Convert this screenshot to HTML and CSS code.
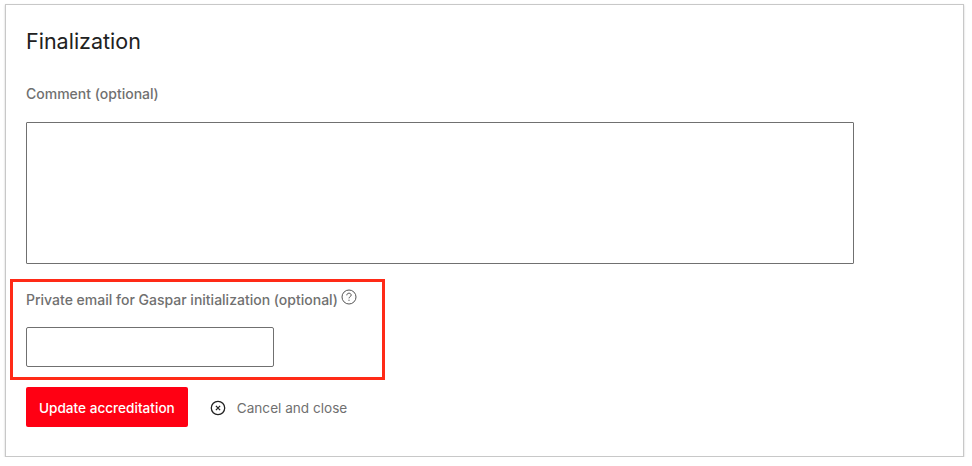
FILE: index.html
```html
<!DOCTYPE html>
<html lang="en">

<head>
    <meta charset="UTF-8">
    <title>Finalization</title>
    <link rel="stylesheet" href="styles.css">
</head>

<body>
    <form class="card">
        <h2>Finalization</h2>
        <div class="form-group comment-group">
            <label for="comment">Comment (optional)</label>
            <textarea id="comment"></textarea>
        </div>
        <div class="form-group email-group">
            <label for="email">Private email for Gaspar initialization (optional)
                <svg class="help-icon" width="16" height="16" viewBox="0 -1 16 16" fill="none" stroke="#555" stroke-width="1">
                    <circle cx="8" cy="8" r="7" />
                    <path d="M5.8 6.3c0-1.3 1-2.1 2.2-2.1s2.2 .8 2.2 1.9c0 1.6-2.2 1.6-2.2 3.2" />
                    <path d="M8 10.7v1.2" />
                </svg>
            </label>
            <input type="text" id="email">
        </div>
        <div class="actions">
            <button type="button" class="btn-primary">Update accreditation</button>
            <a class="cancel" href="#">
                <svg width="16" height="16" viewBox="0 0 16 16" fill="none" stroke="#222" stroke-width="1.3">
                    <circle cx="8" cy="8" r="6.7" />
                    <path d="M5.9 5.9l4.2 4.2M10.1 5.9l-4.2 4.2" />
                </svg>
                Cancel and close
            </a>
        </div>
        <div class="highlight"></div>
    </form>
</body>

</html>
```

FILE: styles.css
```css
body {
    margin: 0;
    background-color: #fff;
    font-family: 'Inter', 'Liberation Sans', sans-serif;
}

.card {
    position: relative;
    box-sizing: border-box;
    width: 959px;
    height: 453px;
    margin: 4px 0 0 5px;
    padding: 24px 20px;
    background-color: #fff;
    border: 1px solid #c8c8c8;
    box-shadow: 0 1px 2px rgba(0, 0, 0, 0.2);
}

h2 {
    margin: 0;
    height: 24px;
    font-size: 21.5px;
    line-height: 24px;
    font-weight: 400;
    color: #212121;
}

.form-group label {
    display: block;
    font-size: 14px;
    line-height: 20px;
    font-weight: 500;
    color: #707070;
}

.comment-group {
    margin-top: 31px;
}

textarea {
    display: block;
    box-sizing: border-box;
    width: 828px;
    height: 142px;
    margin-top: 18px;
    border: 1px solid #707070;
    border-radius: 1px;
    resize: none;
}

.email-group {
    margin-top: 24px;
}

.email-group label {
    height: 20px;
}

.help-icon {
    vertical-align: 1px;
    margin-left: -1px;
    overflow: visible;
}

input {
    display: block;
    box-sizing: border-box;
    width: 248px;
    height: 40px;
    margin-top: 19px;
    border: 1px solid #707070;
    border-radius: 2px;
}

.actions {
    display: flex;
    align-items: center;
    gap: 22px;
    margin-top: 20px;
}

.btn-primary {
    height: 40px;
    padding: 2px 13px 0;
    border: none;
    border-radius: 2px;
    background-color: #ff0013;
    color: #fff;
    font-family: inherit;
    font-size: 13.6px;
    font-weight: 500;
}

.cancel {
    display: flex;
    align-items: center;
    gap: 11px;
    padding-top: 2px;
    font-size: 13.6px;
    color: #707070;
    text-decoration: none;
}

.highlight {
    position: absolute;
    left: 4px;
    top: 274px;
    width: 369px;
    height: 95px;
    border: 3px solid #ff2a17;
}
```
